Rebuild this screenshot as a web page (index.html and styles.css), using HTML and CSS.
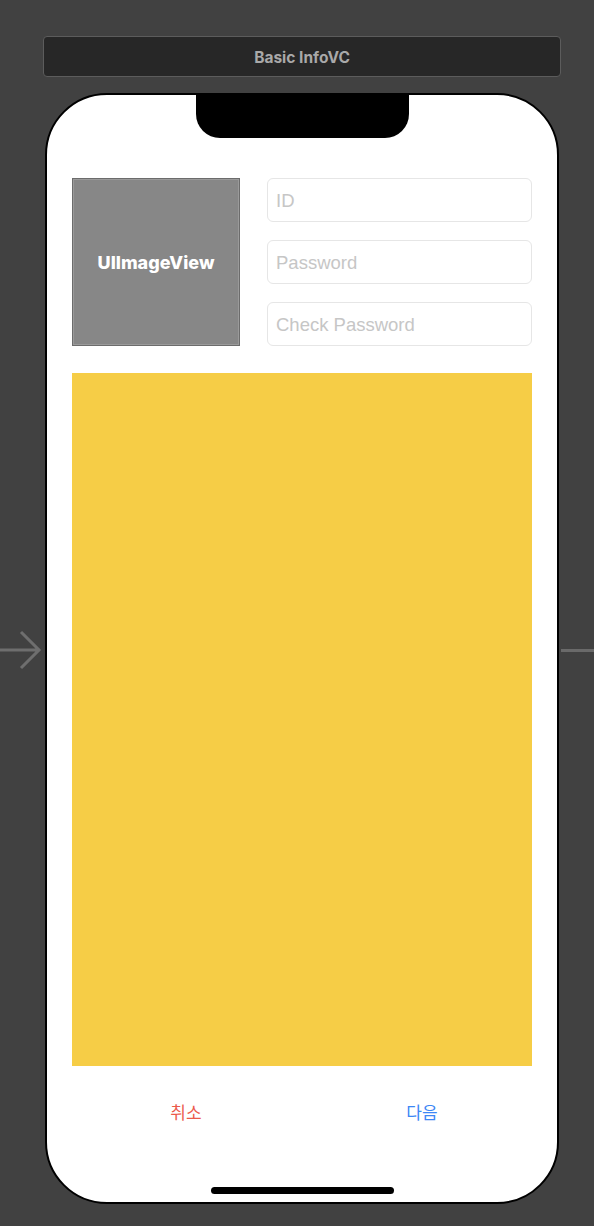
FILE: index.html
```html
<!DOCTYPE html>
<html lang="ko">
<head>
  <meta charset="UTF-8">
  <meta name="viewport" content="width=device-width, initial-scale=1.0">
  <title>Basic InfoVC</title>
  <link rel="stylesheet" href="styles.css">
</head>
<body>
  <div class="canvas">
    <svg class="segue-in" width="44" height="40" viewBox="0 0 44 40">
      <path d="M0 20 H40 M21 2 L39 20 L21 38" fill="none" stroke="#6e6e6e" stroke-width="3"/>
    </svg>
    <div class="segue-out"></div>

    <div class="scene-title">Basic InfoVC</div>

    <div class="phone">
      <div class="notch"></div>

      <div class="top-row">
        <div class="image-view">UIImageView</div>
        <div class="fields">
          <div class="field">ID</div>
          <div class="field">Password</div>
          <div class="field">Check Password</div>
        </div>
      </div>

      <div class="yellow-box"></div>

      <div class="buttons">
        <div class="btn cancel">취소</div>
        <div class="btn next">다음</div>
      </div>

      <div class="home-bar"></div>
    </div>
  </div>
</body>
</html>
```

FILE: styles.css
```css
html, body {
  margin: 0;
  padding: 0;
  background-color: #414141;
}
body {
  font-family: "Liberation Sans", "Noto Sans CJK KR", sans-serif;
}
.canvas {
  position: relative;
  width: 594px;
  height: 1226px;
  display: flex;
  flex-direction: column;
  align-items: flex-start;
}
.segue-in {
  position: absolute;
  left: 0;
  top: 630px;
}
.segue-out {
  position: absolute;
  left: 561px;
  top: 649px;
  width: 33px;
  height: 3px;
  background-color: #6a6a6a;
}
.scene-title {
  margin: 36px 0 0 43px;
  width: 516px;
  height: 39px;
  line-height: 41px;
  border: 1px solid #5c5c5c;
  border-radius: 4px;
  background-color: #272727;
  color: #a9a9a9;
  font-family: "Inter", "Liberation Sans", sans-serif;
  font-size: 15.5px;
  font-weight: bold;
  text-align: center;
}
.phone {
  position: relative;
  margin: 16px 0 0 45px;
  width: 460px;
  height: 1107px;
  border: 2px solid #000;
  border-radius: 62px;
  background-color: #fff;
  padding: 0 25px;
  display: flex;
  flex-direction: column;
}
.notch {
  position: absolute;
  left: 149px;
  top: -1px;
  width: 213px;
  height: 44px;
  background-color: #000;
  border-radius: 0 0 24px 24px;
}
.top-row {
  margin-top: 83px;
  display: flex;
  gap: 27px;
}
.image-view {
  width: 166px;
  height: 166px;
  border: 1px solid #6c6c6c;
  outline: 1px solid #9a9a9a;
  outline-offset: -2px;
  background-color: #878787;
  color: #fff;
  font-family: "Inter", "Liberation Sans", sans-serif;
  font-size: 18px;
  font-weight: 800;
  display: flex;
  align-items: center;
  justify-content: center;
}
.fields {
  flex: 1;
  display: flex;
  flex-direction: column;
  gap: 18px;
}
.field {
  height: 42px;
  line-height: 44px;
  border: 1px solid #e6e6e6;
  border-radius: 6px;
  padding-left: 8px;
  color: #c6c6c6;
  font-size: 18.5px;
}
.yellow-box {
  margin-top: 27px;
  height: 693px;
  background-color: #f6cd46;
}
.buttons {
  margin-top: 36px;
  display: flex;
}
.btn {
  flex: 1;
  text-align: center;
  font-size: 17px;
  line-height: 24px;
}
.cancel {
  color: #eb5a4b;
  padding-left: 4px;
}
.next {
  color: #3d87f5;
  padding-left: 16px;
}
.home-bar {
  position: absolute;
  left: 164px;
  bottom: 8px;
  width: 183px;
  height: 7px;
  border-radius: 4px;
  background-color: #000;
}
```
